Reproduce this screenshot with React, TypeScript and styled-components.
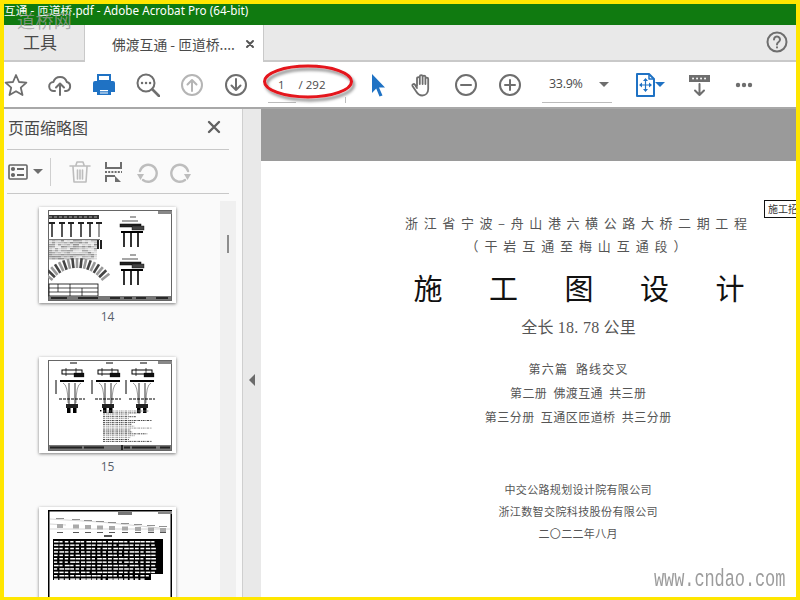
import React from "react";
import styled, { createGlobalStyle } from "styled-components";

const Global = createGlobalStyle`
  html, body { margin: 0; padding: 0; background: #fff; }
  * { box-sizing: border-box; }
`;
const UI = `"Open Sans", "Noto Sans CJK SC", sans-serif`;
const CJK = `"Noto Sans CJK SC", sans-serif`;

const Frame = styled.div`
  position: relative; width: 800px; height: 600px; border: solid #ffe600; border-width: 4px 4px 3px 4px;
  display: flex; flex-direction: column; overflow: hidden; font-family: ${UI}; background: #fff;
`;
const TitleBar = styled.div`
  height: 21px; flex: none; background: #107a10; color: #fff; font: 11.7px/13px "Noto Sans", ${CJK}; white-space: nowrap;
`;
const SiteMark = styled.div`
  position: absolute; left: 13px; top: 4px; font: 18px/24px ${CJK}; letter-spacing: .4px; color: rgba(155,155,155,.75); z-index: 2;
`;
const TabBar = styled.div`
  height: 37px; flex: none; display: flex; background: #e9e9e9; border-bottom: 2px solid #c9c9c9; position: relative;
`;
const ToolsTab = styled.div`
  width: 80px; padding-right: 8px; text-align: center; font: 17px/34px ${CJK}; color: #4a4a4a;
`;
const DocTab = styled.div`
  width: 180px; height: 37px; background: #fff; border: solid #c9c9c9; border-width: 0 1px 0 1px; display: flex; align-items: center;
  padding-left: 27px; gap: 10px; font: 13.8px/34px ${CJK}; color: #4a4a4a; position: relative; z-index: 1; white-space: nowrap;
`;
const HelpSlot = styled.div`
  margin-left: auto; margin-right: 8px; margin-bottom: 2px; width: 22px; align-self: center; display: flex;
`;
const Toolbar = styled.div`
  height: 47px; flex: none; display: flex; align-items: center; gap: 20px; background: #fff; border-bottom: 2px solid #a8a8a8;
`;
const Ico = styled.span`
  width: 24px; height: 24px; flex: none; display: flex; align-items: center; justify-content: center;
`;
const PageField = styled.div`
  width: 78px; height: 36px; flex: none; position: relative; font: 11.5px/36px "Open Sans", sans-serif; color: #4a4a4a; padding-left: 10px; display: flex; gap: 14px;
  &::before { content: ""; position: absolute; left: 0; bottom: 0; width: 28px; height: 1px; background: #bcbcbc; }
  &::after { content: ""; position: absolute; right: 0; bottom: 0; width: 1px; height: 6px; background: #bcbcbc; }
`;
const RedRing = styled.svg`
  position: absolute; left: 254px; top: 57px; pointer-events: none; z-index: 3;
`;
const ZoomField = styled.div`
  width: 70px; height: 36px; flex: none; border-bottom: 1px solid #bcbcbc; font: 12.5px/36px "Open Sans", sans-serif; color: #4a4a4a;
  display: flex; align-items: center; padding-left: 7px; gap: 16px; letter-spacing: -.3px;
`;
const CaretDown = styled.i<{ $c?: string }>`
  width: 0; height: 0; border: solid transparent; border-width: 5px 5px 0 5px; border-top-color: ${p => p.$c || "#6e6e6e"}; display: block; flex: none;
`;
const MoveGroup = styled.div`
  width: 36px; flex: none; display: flex; align-items: center; padding-left: 4px;
`;
const Body = styled.div`
  flex: 1; min-height: 0; display: flex;
`;
const SidePanel = styled.aside`
  width: 239px; flex: none; background: #fafafa; border-right: 1px solid #cfcfcf; display: flex; flex-direction: column;
`;
const PanelHead = styled.div`
  height: 41px; margin: 0 13px 0 3px; flex: none; border-bottom: 1px solid #c8c8c8; display: flex; align-items: center; justify-content: space-between; padding: 0 8px 4px 1px;
  font: 16px/22px ${CJK}; color: #4a4a4a;
`;
const PanelTools = styled.div`
  height: 44px; margin: 0 13px 0 3px; flex: none; border-bottom: 1px solid #c8c8c8; display: flex; align-items: center; padding-left: 1px;
`;
const Tool = styled.span<{ $ml: number }>`
  display: flex; flex: none; margin-left: ${p => p.$ml}px;
`;
const Divider = styled.span`
  width: 1px; height: 28px; background: #cfcfcf; flex: none; margin-left: 7px;
`;
const ThumbZone = styled.div`
  flex: 1; min-height: 0; display: flex; overflow: hidden;
`;
const ThumbList = styled.div`
  width: 216px; flex: none; display: flex; flex-direction: column; align-items: flex-start; padding: 13px 0 0 35px;
`;
const ThumbItem = styled.figure`
  margin: 0 0 30px; width: 137px; display: flex; flex-direction: column; align-items: center;
`;
const ThumbCard = styled.div`
  width: 137px; height: 96px; flex: none; background: #fff; box-shadow: 0 1px 3px rgba(0,0,0,.5); padding: 3px 0 0 9px; display: flex;
`;
const ThumbNum = styled.figcaption`
  font: 12px/20px "Open Sans", sans-serif; color: #59606a; margin-top: 4px;
`;
const Track = styled.div`
  width: 16px; flex: none; background: #f0f0f0; position: relative; margin-top: 7px;
`;
const TrackThumb = styled.div`
  position: absolute; left: 7px; top: 34px; width: 2px; height: 18px; background: #8c8c8c;
`;
const Splitter = styled.div`
  width: 18px; flex: none; background: #e9e9e9; display: flex; align-items: center; justify-content: center; padding-top: 54px;
  &::after { content: ""; border: solid transparent; border-width: 6px 6px 6px 0; border-right-color: #6b6b6b; }
`;
const Main = styled.main`
  flex: 1; min-width: 0; display: flex; flex-direction: column; position: relative; overflow: hidden;
`;
const GreyBand = styled.div`
  height: 52px; flex: none; background: #9a9a9a;
`;
const Sheet = styled.div`
  flex: 1; background: #fff; padding: 52px 0 0 99px; display: flex; flex-direction: column; align-items: center; font-family: ${CJK};
`;
const Line = styled.div<{ $size: number; $ls: number; $lh: number; $mt: number; $ml?: number; $c?: string }>`
  font-size: ${p => p.$size}px; line-height: ${p => p.$lh}px; letter-spacing: ${p => p.$ls}px; margin-top: ${p => p.$mt}px;
  margin-right: -${p => p.$ls}px; margin-left: ${p => p.$ml || 0}px; color: ${p => p.$c || "#555"}; white-space: pre; font-weight: 400;
`;
const SerifNum = styled.span`
  font-family: "Liberation Serif", serif;
`;
const EdgeTag = styled.div`
  position: absolute; left: 503px; top: 91px; width: 32px; height: 18px; border: 1px solid #111; border-right: none; background: #fff; font: 10px/16px ${CJK};
  padding-left: 3px; color: #333; overflow: hidden; white-space: nowrap;
`;
const WebMark = styled.div`
  position: absolute; left: 650px; top: 565px; font: 17px/22px "Liberation Mono", monospace; color: #9c9c9c; transform: scaleY(1.45); transform-origin: 0 50%; white-space: nowrap; letter-spacing: -.1px; z-index: 3;
`;

const G = "#6e6e6e";
const B = "#1f72c4";
const Svg: React.FC<{ w?: number; h?: number; c?: string; sw?: number; children: React.ReactNode }> = ({ w = 24, h = 24, c = G, sw = 2, children }) => (
  <svg width={w} height={h} viewBox={`0 0 ${w} ${h}`} fill="none" stroke={c} strokeWidth={sw} strokeLinecap="round" strokeLinejoin="round">{children}</svg>
);

const rnd = (seed: number) => () => { seed = (seed * 9301 + 49297) % 233280; return seed / 233280; };

const Elevation: React.FC<{ x: number; y: number }> = ({ x, y }) => (
  <g stroke="#000" fill="none">
    <rect x={x} y={y + 4} width="21" height="3" fill="#222" strokeWidth=".5" />
    <path d={`M${x + 2} ${y + 1}h16M${x + 10} ${y - 3}h6`} strokeWidth=".7" />
    <rect x={x + 12} y={y + 6} width="12" height="4" fill="#444" strokeWidth=".4" />
    <path d={`M${x + 1} ${y + 12}h22`} strokeWidth="2" />
    <path d={`M${x + 4} ${y + 13}v14M${x + 11} ${y + 13}v14M${x + 18} ${y + 13}v14`} strokeWidth="1.6" />
  </g>
);

const Page14: React.FC = () => {
  const r = rnd(14);
  const cells: React.ReactNode[] = [];
  for (let y = 30; y < 50; y += 2) for (let x = 1; x < 48; x += 3) {
    const v = Math.floor(r() * 90 + 140);
    cells.push(<rect key={`${x}-${y}`} x={x} y={y} width="3" height="1.5" fill={`rgb(${v},${v},${v})`} />);
  }
  const arc: React.ReactNode[] = [];
  for (let i = 0; i < 17; i++) {
    const a = (-142 + i * 6.5) * Math.PI / 180;
    const cx = 29 + 31 * Math.cos(a), cy = 89 + 31 * Math.sin(a);
    arc.push(<path key={i} d={`M${cx} ${cy}L${cx + 10 * Math.cos(a)} ${cy + 10 * Math.sin(a)}`} stroke={i % 2 ? "#444" : "#999"} strokeWidth="2.6" />);
  }
  return (
    <svg width="125" height="91" viewBox="0 0 125 91">
      <rect x=".5" y=".5" width="123" height="90" fill="#fff" stroke="#666" />
      <rect x="110" y="1" width="14" height="3" fill="#888" />
      <rect x="1" y="5" width="50" height="4" fill="#333" />
      <path d="M1 7h51" stroke="#fff" strokeWidth=".6" strokeDasharray="3 2" />
      {[3, 13, 22, 32, 41, 50].map(x => (
        <g key={x}><rect x={x} y="12" width="2" height="15" fill={x === 50 ? "#999" : "#555"} /><rect x={x - 2} y="12" width="6" height="2" fill="#222" /></g>
      ))}
      <rect x="0" y="29" width="52" height="1" fill="#777" />
      {cells}
      <rect x="49" y="30" width="2" height="9" fill="#222" /><rect x="52" y="30" width="2" height="9" fill="#222" />
      {arc}
      <rect x="1" y="74" width="49" height="12" fill="#fff" stroke="#000" strokeWidth=".8" />
      <path d="M1 78h49M1 82h49M22 74v12M10 74v8M34 78v8" stroke="#000" strokeWidth=".7" />
      <Elevation x={72} y={10} />
      <Elevation x={72} y={48} />
      <rect x="1" y="86" width="122" height="4" fill="#777" />
      <path d="M3 88h16M30 88h20M62 88h10M76 88h8M88 88h10M108 88h12" stroke="#111" strokeWidth="1.4" />
    </svg>
  );
};

const Pier: React.FC<{ x: number }> = ({ x }) => (
  <g stroke="#000" fill="none">
    <rect x={x - 10} y="10" width="20" height="4" strokeWidth="1" />
    <path d={`M${x - 6} 8v8M${x + 4} 8v8`} strokeWidth=".7" />
    <rect x={x + 2} y="13" width="10" height="4" fill="#111" strokeWidth=".3" />
    <path d={`M${x - 12} 21h24`} strokeWidth="2" />
    <path d={`M${x - 9} 23q5 2 5 20M${x + 9} 23q-5 2 -5 20`} strokeWidth=".6" stroke="#555" />
    <path d={`M${x - 3} 23v22M${x + 3} 23v22`} strokeWidth=".8" />
    <path d={`M${x - 13} 39h26`} strokeWidth="1" strokeDasharray="3 1" />
    <rect x={x - 6} y="44" width="12" height="4" fill="#222" stroke="none" />
    <rect x={x - 5} y="48" width="3.5" height="5" fill="#000" stroke="none" />
    <rect x={x + 1} y="48" width="3.5" height="5" fill="#000" stroke="none" />
    <path d={`M${x - 2} 3h7`} strokeWidth="1" />
    <path d={`M${x - 16} 20v14`} strokeWidth="1" />
  </g>
);

const Page15: React.FC = () => {
  const r = rnd(15);
  const rows: React.ReactNode[] = [];
  for (let i = 0; i < 17; i++) {
    const w = 26 + r() * 24;
    rows.push(<path key={i} d={`M55 ${51 + i * 1.9}h${w}`} stroke={r() > .5 ? "#333" : "#888"} strokeWidth=".9" strokeDasharray="2 .8 1 .6" />);
  }
  return (
    <svg width="125" height="91" viewBox="0 0 125 91">
      <rect x=".5" y=".5" width="123" height="90" fill="#fff" stroke="#666" />
      <rect x="110" y="1" width="14" height="3" fill="#888" />
      <Pier x={24} /><Pier x={60} /><Pier x={94} />
      {rows}
      <rect x="52" y="50" width="1.4" height="1.4" fill="#000" />
      <rect x="1" y="85" width="122" height="5" fill="#777" />
      <path d="M2 87.5h14M16 87.5h18M36 87.5h20M76 87.5h6M84 87.5h24M112 87.5h10" stroke="#222" strokeWidth="1.8" />
      <path d="M74 85v5" stroke="#000" strokeWidth="1.4" />
    </svg>
  );
};

const Page16: React.FC = () => {
  const r = rnd(16);
  const cells: React.ReactNode[] = [];
  for (let row = 0; row < 12; row++) {
    const y = 31 + row * 3.4;
    const end = row === 11 ? 96 : 108;
    for (let x = 6; x < end; x += 5.4) {
      cells.push(<rect key={`${x}-${row}`} x={x} y={y} width={3 + r() * 2} height="1.5" fill="#fff" />);
    }
  }
  return (
    <svg width="125" height="91" viewBox="0 0 125 91">
      <rect x=".75" y=".75" width="122.5" height="89" fill="#fff" stroke="#000" strokeWidth="1.5" />
      <rect x="70" y="2" width="14" height="3" fill="#777" />
      <rect x="110" y="1" width="14" height="3" fill="#888" />
      <path d="M2 9l50 3 60 6M2 19h120M2 14l16 1" stroke="#ccc" strokeWidth=".8" fill="none" />
      {[12, 28, 40, 52, 64, 77, 90, 103, 115].map((x, i) => (
        <g key={x}>
          <rect x={x - 4} y={8 + i} width="8" height=".8" fill="#777" />
          <rect x={x - 3} y={14 + i / 2} width="6" height="4" fill="#aaa" />
          <rect x={x - 3} y={22} width="6" height="1" fill="#555" />
        </g>
      ))}
      <rect x="56" y="25" width="8" height="2" fill="#555" />
      <path d="M5 29h110v35H103v6H5z" fill="#000" />
      {cells}
    </svg>
  );
};

export default function App() {
  return (
    <Frame>
      <Global />
      <TitleBar>互通 - 匝道桥.pdf - Adobe Acrobat Pro (64-bit)</TitleBar>
      <SiteMark>道桥网</SiteMark>
      <TabBar>
        <ToolsTab>工具</ToolsTab>
        <DocTab>
          <span>佛渡互通 - 匝道桥....</span>
          <Svg w={10} h={10} sw={2} c="#555"><path d="M2 2l6 6M8 2l-6 6" /></Svg>
        </DocTab>
        <HelpSlot>
          <Svg w={22} h={22} sw={2}>
            <circle cx="11" cy="11" r="9.5" />
            <path d="M8 8.5a3 3 0 1 1 4.6 2.5c-1 .7-1.6 1.2-1.6 2.4" />
            <path d="M11 16.3v.2" />
          </Svg>
        </HelpSlot>
      </TabBar>
      <Toolbar>
        <Ico><Svg sw={1.8}><path d="M12 2l3 7 7.4.7-5.6 5 1.7 7.3L12 18.2 5.5 22l1.7-7.3-5.6-5L9 9z" /></Svg></Ico>
        <Ico><Svg><path d="M7 18H6a4.5 4.5 0 0 1-.6-9A7 7 0 0 1 18.8 9 4.6 4.6 0 0 1 18 18h-1" /><path d="M12 22V11M8 14.5l4-4 4 4" /></Svg></Ico>
        <Ico>
          <svg width="24" height="24" viewBox="0 0 24 24">
            <path d="M6 2h12v6H6z" fill="none" stroke={B} strokeWidth="2" />
            <path d="M3 8h18a2 2 0 0 1 2 2v9h-4v-4H5v4H1v-9a2 2 0 0 1 2-2z" fill={B} />
            <path d="M5 14h14v8H5z" fill={B} />
            <path d="M8 17h8v1.2H8zM8 19.4h8v1H8z" fill="#fff" />
          </svg>
        </Ico>
        <Ico><Svg><circle cx="10" cy="10" r="8.5" /><path d="M16.5 16.5L23 23" strokeWidth="2.6" /><path d="M6 10h.1M10 10h.1M14 10h.1" strokeWidth="2.4" /></Svg></Ico>
        <Ico><Svg c="#b5b5b5"><circle cx="12" cy="12" r="10" /><path d="M12 18V7M7.5 11.5L12 7l4.5 4.5" /></Svg></Ico>
        <Ico><Svg><circle cx="12" cy="12" r="10" /><path d="M12 6v11M7.5 12.5L12 17l4.5-4.5" /></Svg></Ico>
        <PageField><span>1</span><span>/ 292</span></PageField>
        <Ico><svg width="24" height="24" viewBox="0 0 24 24"><path d="M6 1l13 13.5h-6l3.5 8-3 1-3.3-8L6 20z" fill={B} /></svg></Ico>
        <Ico><Svg sw={1.8}><path d="M7 13V5.5a1.4 1.4 0 0 1 2.8 0V11M9.8 11V3.5a1.4 1.4 0 0 1 2.8 0V11M12.6 11V4a1.4 1.4 0 0 1 2.8 0v7M15.4 11V6a1.4 1.4 0 0 1 2.8 0v10c0 4-2.5 6.5-6 6.5-3 0-4.5-1.5-6-4l-3.7-5.5c-.8-1.5 1.3-2.8 2.5-1.3L7 15" /></Svg></Ico>
        <Ico><Svg><circle cx="12" cy="12" r="10" /><path d="M7 12h10" /></Svg></Ico>
        <Ico><Svg><circle cx="12" cy="12" r="10" /><path d="M7 12h10M12 7v10" /></Svg></Ico>
        <ZoomField><span>33.9%</span><CaretDown /></ZoomField>
        <MoveGroup>
          <svg width="19" height="24" viewBox="0 0 19 24" fill="none" stroke={B} strokeWidth="2" strokeLinejoin="round">
            <path d="M1 1h12l5 5v17H1z" />
            <path d="M13 1v5h5" strokeWidth="1.5" />
            <path d="M9.5 6v12M4 12h11" strokeWidth="1.2" />
            <path d="M9.5 5l-2.5 3h5zM9.5 19l-2.5-3h5zM3 12l3-2.5v5zM16 12l-3-2.5v5z" fill={B} stroke="none" />
          </svg>
          <CaretDown $c={B} />
        </MoveGroup>
        <Ico>
          <Svg>
            <rect x="1" y="2" width="21" height="7" fill="#6e6e6e" stroke="none" />
            <path d="M5 5.5h.1M9 5.5h.1M13 5.5h.1M17 5.5h.1" stroke="#fff" strokeWidth="1.8" />
            <path d="M11.5 11v11M7 17.5l4.5 4.5 4.5-4.5" />
          </Svg>
        </Ico>
        <Ico><svg width="24" height="24" viewBox="0 0 24 24" fill={G}><circle cx="6" cy="12" r="2.2" /><circle cx="12" cy="12" r="2.2" /><circle cx="18" cy="12" r="2.2" /></svg></Ico>
      </Toolbar>
      <RedRing width="100" height="46" viewBox="0 0 100 46">
        <defs><filter id="ds" x="-10%" y="-20%" width="125%" height="150%"><feDropShadow dx="2" dy="3" stdDeviation="1.5" floodColor="#000" floodOpacity=".45" /></filter></defs>
        <ellipse cx="50" cy="20.5" rx="43.5" ry="15.5" fill="none" stroke="#e4131b" strokeWidth="3" filter="url(#ds)" />
      </RedRing>
      <Body>
        <SidePanel>
          <PanelHead>
            <span>页面缩略图</span>
            <Svg w={14} h={14} sw={2.4} c="#616161"><path d="M2 2l10 10M12 2L2 12" /></Svg>
          </PanelHead>
          <PanelTools>
            <svg width="20" height="16" viewBox="0 0 20 16" fill="none" stroke="#666" strokeWidth="1.6"><rect x="1" y="1" width="18" height="14" rx="1" /><path d="M9 5h7M9 11h7" strokeWidth="2" /><circle cx="5" cy="5" r="1.3" fill="#666" /><circle cx="5" cy="11" r="1.3" fill="#666" /></svg>
            <Tool $ml={5}><CaretDown /></Tool>
            <Divider />
            <Tool $ml={18}><Svg w={22} h={24} sw={1.6} c="#bdbdbd"><path d="M1 6h20M7 5l1-3h6l1 3M4 7l1 15h12l1-15M8.5 10v9M11 10v9M13.5 10v9" /></Svg></Tool>
            <Tool $ml={13}><svg width="19" height="22" viewBox="0 0 19 22" fill="none" stroke="#6e6e6e" strokeWidth="2"><path d="M2 1v6h15V1M2 21v-6h9M2 15v6" /><path d="M1 11h17" strokeDasharray="2 1.2" strokeWidth="2" /><path d="M11 15l6 6h-6z" fill="#6e6e6e" stroke="none" /></svg></Tool>
            <Tool $ml={13}><Svg w={22} h={24} c="#bdbdbd" sw={2.4}><path d="M7 20A8.5 8.5 0 1 0 4 11" /><path d="M1 14h7l-3.5 6z" fill="#bdbdbd" stroke="none" /></Svg></Tool>
            <Tool $ml={12}><Svg w={22} h={24} c="#bdbdbd" sw={2.4}><path d="M15 20A8.5 8.5 0 1 1 18 11" /><path d="M14 14h7l-3.5 6z" fill="#bdbdbd" stroke="none" /></Svg></Tool>
          </PanelTools>
          <ThumbZone>
            <ThumbList>
              <ThumbItem><ThumbCard><Page14 /></ThumbCard><ThumbNum>14</ThumbNum></ThumbItem>
              <ThumbItem><ThumbCard><Page15 /></ThumbCard><ThumbNum>15</ThumbNum></ThumbItem>
              <ThumbItem><ThumbCard><Page16 /></ThumbCard></ThumbItem>
            </ThumbList>
            <Track><TrackThumb /></Track>
          </ThumbZone>
        </SidePanel>
        <Splitter />
        <Main>
          <GreyBand />
          <Sheet>
            <Line $size={13} $ls={5.6} $lh={20} $mt={0} $ml={-4}>浙江省宁波–舟山港六横公路大桥二期工程</Line>
            <Line $size={13} $ls={5.9} $lh={20} $mt={3} $ml={-4}>（干岩互通至梅山互通段）</Line>
            <Line $size={29} $ls={46.5} $lh={40} $mt={11} $ml={2} $c="#111">施工图设计</Line>
            <Line $size={16} $ls={0.3} $lh={20} $mt={9} $ml={1}>全长 <SerifNum>18. 78</SerifNum> 公里</Line>
            <Line $size={12} $ls={1.2} $lh={20} $mt={21}>第六篇  路线交叉</Line>
            <Line $size={12} $ls={0.4} $lh={20} $mt={4}>第二册  佛渡互通  共三册</Line>
            <Line $size={12} $ls={0.45} $lh={20} $mt={4}>第三分册  互通区匝道桥  共三分册</Line>
            <Line $size={11} $ls={0.34} $lh={20} $mt={52}>中交公路规划设计院有限公司</Line>
            <Line $size={11} $ls={0.4} $lh={20} $mt={2}>浙江数智交院科技股份有限公司</Line>
            <Line $size={11} $ls={0.34} $lh={20} $mt={2}>二〇二二年八月</Line>
          </Sheet>
          <EdgeTag>施工招</EdgeTag>
        </Main>
      </Body>
      <WebMark>www.cndao.com</WebMark>
    </Frame>
  );
}
